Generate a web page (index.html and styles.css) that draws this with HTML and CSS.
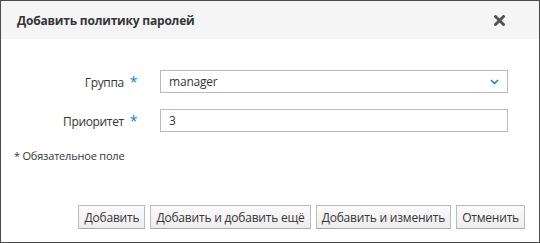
FILE: index.html
```html
<!DOCTYPE html>
<html lang="ru">
<head>
  <meta charset="UTF-8">
  <title>Добавить политику паролей</title>
  <link rel="stylesheet" href="styles.css">
</head>
<body>
  <div class="modal">
    <!-- Заголовок диалога -->
    <div class="modal-header">
      <h4 class="modal-title">Добавить политику паролей</h4>
      <button class="close" aria-label="Закрыть">
        <svg width="11" height="11" viewBox="0 0 11 11">
          <path d="M1.5 1.5 L9.5 9.5 M9.5 1.5 L1.5 9.5" stroke="#555" stroke-width="3" stroke-linecap="round"/>
        </svg>
      </button>
    </div>

    <!-- Форма -->
    <div class="modal-body">
      <div class="form-row">
        <label class="control-label">Группа <span class="req">*</span></label>
        <div class="select">
          <span>manager</span>
          <svg width="9" height="6" viewBox="0 0 9 6">
            <path d="M1 1 L4.5 4.5 L8 1" fill="none" stroke="#0088ce" stroke-width="1.5"/>
          </svg>
        </div>
      </div>
      <div class="form-row">
        <label class="control-label">Приоритет <span class="req">*</span></label>
        <input class="form-control" type="text" value="3">
      </div>
      <p class="required-note">* Обязательное поле</p>
    </div>

    <!-- Кнопки -->
    <div class="modal-footer">
      <button class="btn">Добавить</button>
      <button class="btn">Добавить и добавить ещё</button>
      <button class="btn">Добавить и изменить</button>
      <button class="btn">Отменить</button>
    </div>
  </div>
</body>
</html>
```

FILE: styles.css
```css
* {
  margin: 0;
  padding: 0;
  box-sizing: border-box;
}
body {
  font-family: 'Open Sans', sans-serif;
  font-size: 12px;
  letter-spacing: -0.2px;
  color: #363636;
  background: #fff;
}
/* Kotak dialog */
.modal {
  width: 540px;
  height: 243px;
  border: 1px solid #4a4a4a;
  display: flex;
  flex-direction: column;
  background: #fff;
}
.modal-header {
  background: #f5f5f5;
  height: 38px;
  padding: 0 34px 0 16px;
  display: flex;
  align-items: center;
  justify-content: space-between;
}
.modal-title {
  font-size: 12px;
  font-weight: 700;
  color: #363636;
}
.close {
  border: none;
  background: none;
  display: flex;
  cursor: pointer;
}
.modal-body {
  padding: 31px 31px 0 0;
  flex: 1;
}
.form-row {
  display: grid;
  grid-template-columns: 136px 1fr;
  column-gap: 23px;
  align-items: center;
  margin-bottom: 16px;
}
.control-label {
  text-align: right;
  color: #363636;
  letter-spacing: -0.35px;
}
.req {
  color: #0088ce;
  font-size: 14px;
  margin-left: 3px;
}
.select,
.form-control {
  height: 23px;
  border: 1px solid #bbb;
  background: #fff;
  font-family: inherit;
  font-size: 12px;
  letter-spacing: inherit;
  color: #363636;
  padding: 0 8px;
}
.select {
  display: flex;
  align-items: center;
  justify-content: space-between;
}
.form-control {
  width: 100%;
}
.required-note {
  padding-left: 13px;
  margin-top: 13px;
  color: #363636;
  font-size: 11px;
}
/* Tombol bawah */
.modal-footer {
  display: flex;
  justify-content: flex-end;
  gap: 5px;
  padding: 0 14px 13px 0;
}
.btn {
  height: 24px;
  padding: 0 5px;
  font-family: inherit;
  font-size: 12px;
  letter-spacing: inherit;
  color: #363636;
  border: 1px solid #bbb;
  border-bottom-color: #aaa;
  background: linear-gradient(to bottom, #fafafa 0, #ededed 100%);
  cursor: pointer;
}
```
